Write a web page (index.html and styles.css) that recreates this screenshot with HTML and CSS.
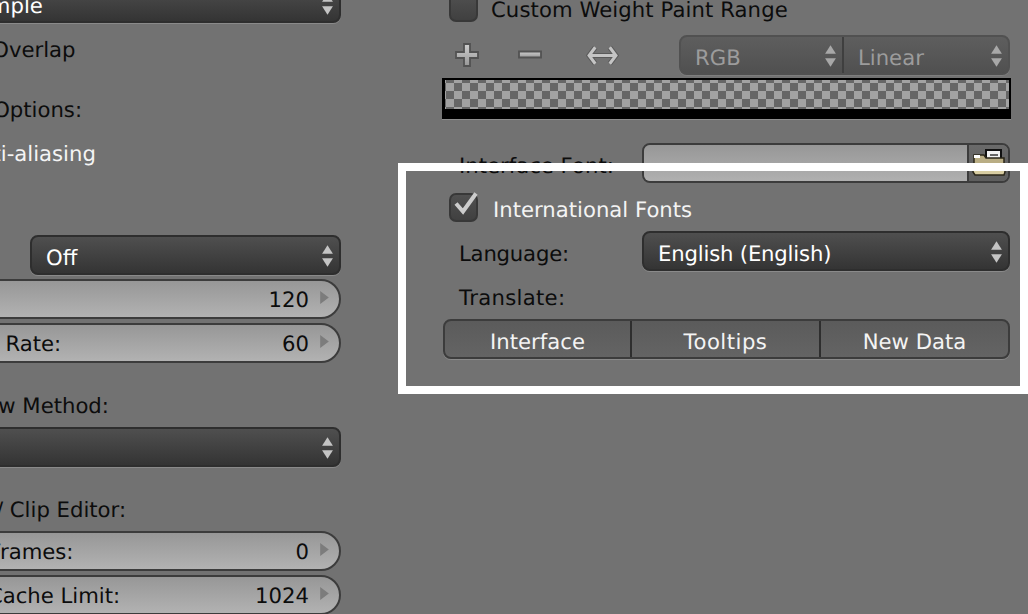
FILE: index.html
```html
<!DOCTYPE html>
<html lang="en">
<head>
<meta charset="utf-8">
<title>User Preferences</title>
<link rel="stylesheet" href="styles.css">
</head>
<body>
<main class="page">
  <section class="col-left">
    <div class="row drop"><span class="drop-text t-sample">Multi-Sample</span>
      <svg class="updown" viewBox="0 0 12 22"><path d="M6 1 11 9H1Z"/><path d="M6 21 11 13H1Z"/></svg></div>
    <div class="row label t-overlap mt-6">Region Overlap</div>
    <div class="row label t-options mt-20">Text Draw Options:</div>
    <div class="row label white t-alias mt-4">Text Anti-aliasing</div>
    <div class="row label-split mt-62">
      <div class="drop half"><span class="drop-text">Off</span>
        <svg class="updown" viewBox="0 0 12 22"><path d="M6 1 11 9H1Z"/><path d="M6 21 11 13H1Z"/></svg></div>
    </div>
    <div class="row num mt-4"><span class="t-num">Time Out:</span><span class="val">120</span><svg class="arrow" viewBox="0 0 8 12"><path d="M0 0 8 6 0 12Z"/></svg></div>
    <div class="row num mt-4"><span class="t-num">Collection Rate:</span><span class="val">60</span><svg class="arrow" viewBox="0 0 8 12"><path d="M0 0 8 6 0 12Z"/></svg></div>
    <div class="row label t-method mt-22">Window Draw Method:</div>
    <div class="row drop mt-2"><svg class="updown" viewBox="0 0 12 22"><path d="M6 1 11 9H1Z"/><path d="M6 21 11 13H1Z"/></svg></div>
    <div class="row label t-clip mt-22">Sequencer / Clip Editor:</div>
    <div class="row num mt-2"><span class="t-frames">Prefetch Frames:</span><span class="val">0</span><svg class="arrow" viewBox="0 0 8 12"><path d="M0 0 8 6 0 12Z"/></svg></div>
    <div class="row num mt-4"><span class="t-frames">Memory Cache Limit:</span><span class="val">1024</span><svg class="arrow" viewBox="0 0 8 12"><path d="M0 0 8 6 0 12Z"/></svg></div>
  </section>

  <section class="col-right">
    <div class="check-row top-check"><span class="check"></span><span class="check-label wide-a">Custom Weight Paint Range</span></div>

    <div class="ramp-tools">
      <div class="tool-icons">
        <svg class="tool plus" viewBox="0 0 24 24">
          <defs><linearGradient id="toolFill" x1="0" y1="0" x2="0" y2="1"><stop offset="0" stop-color="#cfcfcf"/><stop offset="1" stop-color="#979797"/></linearGradient></defs>
          <path fill="url(#toolFill)" d="M9 1h6v8h8v6h-8v8H9v-8H1V9h8Z"/>
        </svg>
        <svg class="tool minus" viewBox="0 0 24 24"><path fill="url(#toolFill)" d="M1 8.500h22v6H1Z"/></svg>
        <svg class="tool swap" viewBox="0 0 32 22">
          <path class="swap-edge" d="M9 3 3 11l6 8M23 3l6 8-6 8M4 11h24"/>
          <path class="swap-core" d="M9 3 3 11l6 8M23 3l6 8-6 8M4 11h24"/>
        </svg>
      </div>
      <div class="seg-drop">
        <div class="seg"><span>RGB</span><svg class="updown" viewBox="0 0 12 22"><path d="M6 1 11 9H1Z"/><path d="M6 21 11 13H1Z"/></svg></div>
        <div class="seg"><span>Linear</span><svg class="updown" viewBox="0 0 12 22"><path d="M6 1 11 9H1Z"/><path d="M6 21 11 13H1Z"/></svg></div>
      </div>
    </div>

    <div class="ramp">
      <svg class="checker" aria-hidden="true">
        <defs>
          <pattern id="checks" width="16" height="16" x="-7" y="-5" patternUnits="userSpaceOnUse">
            <rect width="16" height="16" fill="#a2a2a2"/>
            <rect x="8" width="8" height="8" fill="#666"/>
            <rect y="8" width="8" height="8" fill="#666"/>
          </pattern>
        </defs>
        <rect width="100%" height="100%" fill="url(#checks)"/>
      </svg>
    </div>

    <div class="form-row font-row">
      <span class="form-label">Interface Font:</span>
      <div class="path-field">
        <div class="path-input"></div>
        <div class="path-btn">
          <svg class="folder" viewBox="0 0 34 28">
            <path d="M14 1h15v16H14Z" fill="#f2f2f2" stroke="#111" stroke-width="2"/>
            <path d="M18 6h8M18 10h8" stroke="#666" stroke-width="2"/>
            <path d="M2 6h10l2 3h18v6H2Z" fill="#b9ad84" stroke="#2a2618" stroke-width="1.500"/>
            <path d="M2 6h6v3H2Z" fill="#fff"/>
            <path d="M1 23 2 15h30l1 8-1 3H3Z" fill="#d8cda2" stroke="#2a2618" stroke-width="1.500"/>
          </svg>
        </div>
      </div>
    </div>

    <div class="check-row intl-check"><span class="check on"><svg class="tick" viewBox="0 0 28 28"><path d="M5 8.500l7 8L25-1.500" fill="none"/></svg></span><span class="check-label white">International Fonts</span></div>

    <div class="form-row lang-row">
      <span class="form-label tight-a">Language:</span>
      <div class="drop lang"><span class="drop-text tight-b">English (English)</span>
        <svg class="updown" viewBox="0 0 12 22"><path d="M6 1 11 9H1Z"/><path d="M6 21 11 13H1Z"/></svg></div>
    </div>

    <div class="form-label translate">Translate:</div>

    <div class="btn-group">
      <div class="btn">Interface</div>
      <div class="btn wide-b">Tooltips</div>
      <div class="btn">New Data</div>
    </div>
  </section>

  <div class="focus-frame"></div>
</main>
</body>
</html>
```

FILE: styles.css
```css
* { box-sizing: border-box; }
html, body { margin: 0; height: 100%; }
body { background: #727272; overflow: hidden; }

.page {
  position: relative;
  width: 1028px;
  height: 614px;
  overflow: hidden;
  display: flex;
  align-items: flex-start;
  font-family: "DejaVu Sans", sans-serif;
  font-size: 21.2px;
  text-rendering: geometricPrecision;
  color: #0c0c0c;
  background: #727272;
}

/* small tracking corrections for the reference's hinted text */
.wide-a { letter-spacing: 0.08px; }
.wide-b { letter-spacing: 0.5px; }
.tight-a { letter-spacing: -0.2px; }
.tight-b { letter-spacing: -0.18px; }

/* left column runs off the left edge of the window */
.col-left {
  flex: none;
  width: 481px;
  margin-left: -140px;
  margin-top: -17px;
  display: flex;
  flex-direction: column;
}
.row { height: 40px; flex: none; }
.mt-2 { margin-top: 2px; }
.mt-4 { margin-top: 4px; }
.mt-6 { margin-top: 6px; }
.mt-20 { margin-top: 20px; }
.mt-22 { margin-top: 22px; }
.mt-62 { margin-top: 62px; }

.label { display: flex; align-items: center; white-space: nowrap; }
.white { color: #f4f4f4; }
.t-overlap { padding-left: 53px; }
.t-options { padding-left: 21.500px; }
.t-alias { padding-left: 55px; }
.t-method { padding-left: 10px; }
.t-clip { padding-left: 16px; }

.label-split { display: flex; justify-content: flex-end; }

.drop {
  display: flex;
  align-items: center;
  position: relative;
  height: 40px;
  padding-top: 4px;
  border: 2px solid #2e2e2e;
  border-radius: 8px;
  background: linear-gradient(#4f4f4f, #343434);
  box-shadow: 0 1px 0 #8a8a8a;
  color: #fff;
}
.drop-text { padding-left: 14px; white-space: nowrap; }
.t-sample { padding-left: 42px; }
.half { width: 311px; }
.updown {
  position: absolute;
  right: 5px;
  top: 7px;
  width: 13px;
  height: 24px;
  fill: #c4c4c4;
}

.num {
  display: flex;
  align-items: center;
  white-space: nowrap;
  border: 2px solid #3c3c3c;
  border-radius: 20px;
  background: linear-gradient(#979797, #b2b2b2);
  padding-right: 10px;
}
.num .val { margin-left: auto; margin-right: 11px; }
.arrow { width: 9px; height: 13px; fill: #7c7c7c; margin-bottom: 4px; }
.t-num { padding-left: 32px; }
.t-frames { padding-left: 33px; }

/* right column */
.col-right {
  flex: none;
  width: 567px;
  margin-left: 102px;
  margin-top: -8px;
  display: flex;
  flex-direction: column;
}
.check-row { display: flex; align-items: center; }
.check {
  flex: none;
  position: relative;
  width: 29px;
  height: 29px;
  margin-left: 6px;
  border: 2px solid #383838;
  border-radius: 7px;
  background: linear-gradient(#505050, #404040);
}
.check-label { margin-left: 13px; padding-top: 4px; white-space: nowrap; }
.top-check { height: 30px; }
.tick {
  position: absolute;
  left: 0;
  top: 0;
  width: 28px;
  height: 28px;
  stroke: #cccccc;
  stroke-width: 4;
  overflow: visible;
}

.ramp-tools {
  display: flex;
  align-items: center;
  justify-content: space-between;
  margin-top: 13px;
  height: 40px;
}
.tool-icons { display: flex; align-items: center; margin-left: 12px; }
.tool { stroke: #525252; flex: none; }
.plus, .minus { width: 24px; height: 24px; stroke-width: 1.800; }
.minus { margin-left: 39px; }
.swap {
  width: 33px;
  height: 23px;
  margin-left: 44px;
  fill: none;
}
.swap-edge { stroke: #5a5a5a; stroke-width: 5; }
.swap-core { stroke: #c4c4c4; stroke-width: 3; }
.seg-drop {
  display: flex;
  flex: none;
  width: 331px;
  height: 40px;
  border: 2px solid #515151;
  border-radius: 8px;
  background: linear-gradient(#5e5e5e, #505050);
  color: #9c9c9c;
  box-shadow: 0 1px 0 #7e7e7e;
}
.seg {
  position: relative;
  display: flex;
  align-items: center;
  padding-left: 14px;
  padding-top: 4px;
}
.seg:first-child { width: 163px; border-right: 2px solid #3f3f3f; }
.seg:last-child { flex: 1; }
.seg .updown { fill: #a8a8a8; }

.ramp {
  margin-top: 3px;
  margin-left: -1px;
  height: 41px;
  width: 569px;
  background: #000;
  padding: 2px 2px 10px 3px;
  box-shadow: 0 1px 0 #8e8e8e;
}
.checker {
  display: block;
  width: 100%;
  height: 100%;
  shape-rendering: crispEdges;
}

.form-row { display: flex; align-items: center; padding-left: 16px; }
.form-label { width: 183px; flex: none; padding-top: 4px; white-space: nowrap; }
.font-row { margin-top: 24px; height: 40px; }
.path-field {
  display: flex;
  width: 368px;
  height: 40px;
  border: 2px solid #3c3c3c;
  border-radius: 8px;
  overflow: hidden;
}
.path-input { flex: 1; background: linear-gradient(#979797, #b0b0b0); border-right: 2px solid #3c3c3c; }
.path-btn {
  flex: none;
  width: 39px;
  display: flex;
  align-items: center;
  justify-content: center;
  background: linear-gradient(#6a6a6a, #5e5e5e);
}
.folder { width: 34px; height: 28px; }

.intl-check { margin-top: 9px; height: 30px; }
.intl-check .check-label { margin-left: 15px; }
.lang-row { margin-top: 9px; height: 40px; }
.lang { width: 368px; }
.translate { margin-top: 6px; margin-left: 16px; height: 40px; padding-top: 1px; line-height: 40px; letter-spacing: 0.3px; }

.btn-group {
  display: grid;
  grid-template-columns: 187px 189px 1fr;
  width: 567px;
  height: 40px;
  margin-top: 2px;
  border: 2px solid #3c3c3c;
  border-radius: 8px;
  background: linear-gradient(#5b5b5b, #646464);
  box-shadow: 0 1px 0 #8a8a8a;
  color: #f4f4f4;
}
.btn {
  display: flex;
  align-items: center;
  justify-content: center;
  padding-top: 4px;
  border-right: 2px solid #2e2e2e;
}
.btn:last-child { border-right: 0; }

/* highlight frame drawn over the screenshot */
.focus-frame {
  position: absolute;
  left: 398px;
  top: 163px;
  width: 630px;
  height: 231px;
  border: 8px solid #fff;
}
```
